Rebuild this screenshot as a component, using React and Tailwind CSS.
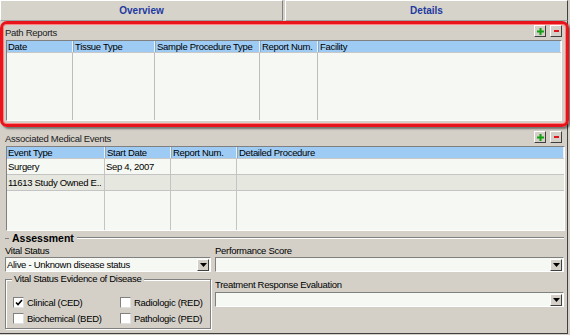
import React from 'react';

const font = { fontFamily: '"Liberation Sans", Arial, sans-serif' };
const T = 'text-[9.5px] tracking-[-0.3px]';

const pathCols = [
  { label: 'Date', w: 'w-[66px]' },
  { label: 'Tissue Type', w: 'w-[82px]' },
  { label: 'Sample Procedure Type', w: 'w-[105px]' },
  { label: 'Report Num.', w: 'w-[58px]' },
  { label: 'Facility', w: 'flex-1' },
];

const eventCols = [
  { label: 'Event Type', w: 'w-[98px]' },
  { label: 'Start Date', w: 'w-[66px]' },
  { label: 'Report Num.', w: 'w-[66px]' },
  { label: 'Detailed Procedure', w: 'flex-1' },
];

const eventRows = [
  { cells: ['Surgery', 'Sep 4, 2007', '', ''], bg: 'bg-[#f5f8f3]' },
  { cells: ['11613 Study Owned E..', '', '', ''], bg: 'bg-[#e6e7de]' },
];

function SmallBtn({ kind }) {
  return (
    <div className="w-[12px] h-[12px] bg-[#d4d0c8] border border-t-white border-l-white border-r-[#404040] border-b-[#404040] flex items-center justify-center">
      {kind === 'add' ? (
        <svg width="7" height="7" viewBox="0 0 7 7"><path d="M3.5 0v7M0 3.5h7" stroke="#10a010" strokeWidth="2" /></svg>
      ) : (
        <span className="block w-[5px] h-[2px] bg-[#e0141c]" />
      )}
    </div>
  );
}

function SectionTitle({ label, h }) {
  return (
    <div className={`flex items-end justify-between pl-[5px] pr-[4px] pb-[1px] ${h}`}>
      <span className={`${T} leading-[12px] text-[#202020]`}>{label}</span>
      <div className="flex gap-[4px] mb-[2px]">
        <SmallBtn kind="add" />
        <SmallBtn kind="remove" />
      </div>
    </div>
  );
}

function HeaderRow({ cols }) {
  return (
    <div className="flex h-[12px] bg-[#9dcbf4] border-b border-b-[#c8c8c8]">
      {cols.map((c, i) => (
        <div
          key={c.label}
          className={`${c.w} ${T} leading-[12px] pl-[1px] border-r border-r-[#e8f0f8] ${i > 0 ? 'border-l border-l-[#8aa8c4]' : ''} whitespace-nowrap overflow-hidden`}
        >
          {c.label}
        </div>
      ))}
    </div>
  );
}

function Select({ value }) {
  return (
    <div className="flex h-[15px] bg-[#f5f8f3] border border-t-[#808080] border-l-[#808080] border-r-white border-b-white">
      <div className={`flex-1 ${T} leading-[13px] pl-[1px] whitespace-nowrap overflow-hidden`}>{value}</div>
      <div className="w-[12px] h-[12px] mt-[0.5px] mr-[1px] bg-[#d4d0c8] border border-t-white border-l-white border-r-[#404040] border-b-[#404040] flex items-center justify-center">
        <svg width="7" height="4" viewBox="0 0 7 4"><path d="M0 0h7L3.5 4z" fill="#000" /></svg>
      </div>
    </div>
  );
}

function Check({ checked, label }) {
  return (
    <div className="flex items-center gap-[3px] h-[13px] whitespace-nowrap">
      <div className="w-[11px] h-[11px] shrink-0 bg-white border border-t-[#808080] border-l-[#808080] border-r-[#e0e0e0] border-b-[#e0e0e0] flex items-center justify-center">
        {checked && (
          <svg width="8" height="7" viewBox="0 0 8 7"><path d="M1 3.5l2 2L7 1" stroke="#000" strokeWidth="1.6" fill="none" /></svg>
        )}
      </div>
      <span className={`${T} leading-[12px]`}>{label}</span>
    </div>
  );
}

export default function App() {
  return (
    <div className="relative w-[570px] h-[335px] bg-[#d4d0c8] text-black overflow-hidden" style={font}>
      {/* tabs */}
      <div className="flex h-[21px] gap-[2px]">
        <div className="flex-1 flex items-center justify-center border border-t-white border-l-white border-r-[#808080] border-b-[#a0a0a0] bg-[#d6d3cb]">
          <span className="text-[10px] font-bold text-[#1f3aa0]">Overview</span>
        </div>
        <div className="flex-1 flex items-center justify-center border border-t-white border-l-white border-r-[#404040] border-b-[#a0a0a0] bg-[#d6d3cb] mr-[2px]">
          <span className="text-[10px] font-bold text-[#1f3aa0]">Details</span>
        </div>
      </div>

      {/* panel */}
      <div className="h-[313px] border-r border-r-[#404040] border-b border-b-[#404040] mr-[2px] pr-[1px]">
        <SectionTitle label="Path Reports" h="h-[19px]" />
        <div className="ml-[6px] mr-[4px] h-[81px] flex flex-col border border-t-[#808080] border-l-[#808080] border-r-white border-b-white">
          <HeaderRow cols={pathCols} />
          <div className="flex-1 flex bg-[#f5f8f3]">
            {pathCols.map((c, i) => (
              <div key={c.label} className={`${c.w} ${i < pathCols.length - 1 ? 'border-r border-r-[#bdbdbd]' : ''}`} />
            ))}
          </div>
        </div>

        <div className="h-[4px]" />
        <SectionTitle label="Associated Medical Events" h="h-[21px]" />
        <div className="ml-[6px] mr-[1px] h-[85px] flex flex-col border border-t-[#808080] border-l-[#808080] border-r-white border-b-white">
          <HeaderRow cols={eventCols} />
          {eventRows.map((r, ri) => (
            <div key={ri} className={`flex h-[16px] ${r.bg} border-b border-b-[#c4c4c4]`}>
              {r.cells.map((t, i) => (
                <div
                  key={i}
                  className={`${eventCols[i].w} ${T} leading-[15px] pl-[1px] whitespace-nowrap overflow-hidden ${i < 3 ? 'border-r border-r-[#c4c4c4]' : ''}`}
                >
                  {t}
                </div>
              ))}
            </div>
          ))}
          <div className="flex-1 flex bg-[#f5f8f3]">
            {eventCols.map((c, i) => (
              <div key={c.label} className={`${c.w} ${i < 3 ? 'border-r border-r-[#c4c4c4]' : ''}`} />
            ))}
          </div>
        </div>

        {/* assessment */}
        <div className="flex items-center h-[14px] pl-[5px] pr-[2px]">
          <div className="w-[4px] h-[1px] bg-[#808080]" />
          <span className="text-[10.5px] font-bold px-[3px] leading-[13px]">Assessment</span>
          <div className="flex-1 h-[2px] border-t border-t-[#808080] border-b border-b-white" />
        </div>

        <div className="grid grid-cols-[206px_1fr] gap-x-[4px] pl-[5px] pr-[2px]">
          <div className="flex flex-col">
            <span className={`${T} leading-[11px] h-[12px]`}>Vital Status</span>
            <Select value="Alive - Unknown disease status" />
          </div>
          <div className="flex flex-col">
            <span className={`${T} leading-[11px] h-[12px]`}>Performance Score</span>
            <Select value="" />
          </div>

          <div className="relative mt-[7px] h-[50px] border border-[#808080] shadow-[inset_1px_1px_0_#fff,1px_1px_0_#fff]">
            <span className={`absolute -top-[7px] left-[6px] px-[2px] bg-[#d4d0c8] ${T} leading-[12px]`}>
              Vital Status Evidence of Disease
            </span>
            <div className="grid grid-cols-[107px_1fr] gap-y-[3px] pt-[16px] pl-[7px]">
              <Check checked label="Clinical (CED)" />
              <Check label="Radiologic (RED)" />
              <Check label="Biochemical (BED)" />
              <Check label="Pathologic (PED)" />
            </div>
          </div>
          <div className="flex flex-col mt-[7px]">
            <span className={`${T} leading-[11px] h-[13px]`}>Treatment Response Evaluation</span>
            <Select value="" />
          </div>
        </div>
      </div>

      {/* red annotation highlight */}
      <div className="absolute left-0 top-[21px] w-[569px] h-[106px] rounded-[7px] border-[3px] border-[#e8141c] shadow-[inset_0_0_0_1px_#ff8080,2px_2px_2px_rgba(0,0,0,0.45)] pointer-events-none" />
    </div>
  );
}
